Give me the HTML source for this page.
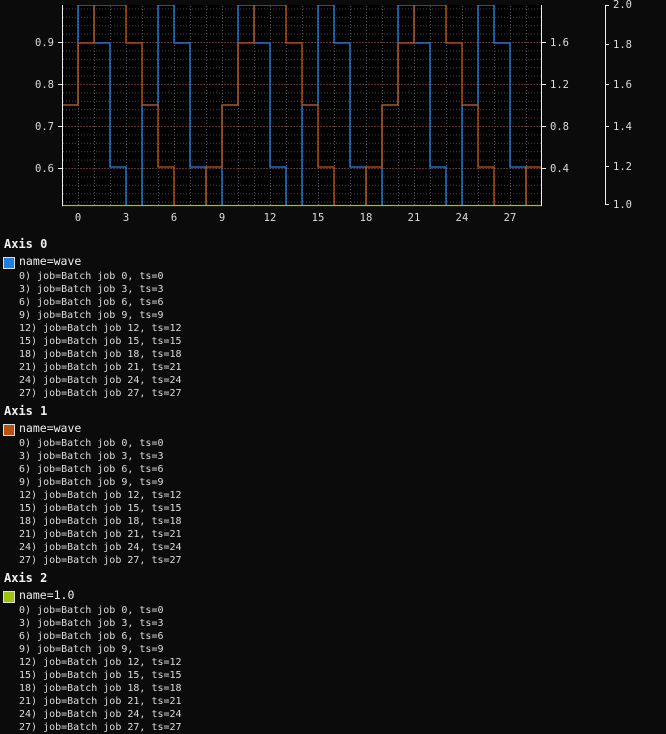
<!DOCTYPE html>
<html><head><meta charset="utf-8"><style>
html,body{margin:0;padding:0;background:#0b0b0b;width:666px;height:734px;overflow:hidden}
body{position:relative;font-family:"DejaVu Sans Mono","Liberation Mono",monospace;color:#e6e6e6}
.t{position:absolute;left:4px;font-size:12px;font-weight:bold;color:#f0f0f0}
.sw{position:absolute;left:3px;width:10px;height:10px;border:1px solid #ddd}
.n{position:absolute;left:19px;font-size:11.5px;color:#eee}
.l{position:absolute;left:19px;font-size:10px;line-height:13px;color:#ddd;white-space:pre}
svg text{font-family:"DejaVu Sans Mono","Liberation Mono",monospace;font-size:10.5px;fill:#ddd}
</style></head><body>
<svg width="666" height="230" style="position:absolute;left:0;top:0">
<defs>
<pattern id="gv" x="14" y="0" width="16" height="300" patternUnits="userSpaceOnUse"><line x1="0.5" y1="0" x2="0.5" y2="300" stroke="#555" stroke-dasharray="1,2"/></pattern>
<pattern id="gh" x="0" y="0" width="700" height="8.4" patternUnits="userSpaceOnUse"><line x1="0" y1="0.5" x2="700" y2="0.5" stroke="#444" stroke-dasharray="1,2"/></pattern>
<clipPath id="c"><rect x="62" y="5" width="480" height="200"/></clipPath>
</defs>
<rect x="62" y="5" width="480" height="200" fill="#000"/>
<rect x="62" y="5" width="480" height="200" fill="url(#gh)"/>
<rect x="62" y="5" width="480" height="200" fill="url(#gv)"/>
<g stroke="#6a2020" stroke-dasharray="1,2"><line x1="62" y1="42.5" x2="542" y2="42.5"/><line x1="62" y1="84.5" x2="542" y2="84.5"/><line x1="62" y1="126.5" x2="542" y2="126.5"/><line x1="62" y1="168.5" x2="542" y2="168.5"/></g>
<g clip-path="url(#c)" fill="none" stroke-width="1.3">
<path stroke="#1f86ef" d="M62,105 H78 V5 H94 V43 H110 V167 H126 V206 H142 V105 H158 V5 H174 V43 H190 V167 H206 V206 H222 V105 H238 V5 H254 V43 H270 V167 H286 V206 H302 V105 H318 V5 H334 V43 H350 V167 H366 V206 H382 V105 H398 V5 H414 V43 H430 V167 H446 V206 H462 V105 H478 V5 H494 V43 H510 V167 H526 V206 H542"/>
<path stroke="#c9540f" d="M62,105 H78 V43 H94 V5 H126 V43 H142 V105 H158 V167 H174 V206 H206 V167 H222 V105 H238 V43 H254 V5 H286 V43 H302 V105 H318 V167 H334 V206 H366 V167 H382 V105 H398 V43 H414 V5 H446 V43 H462 V105 H478 V167 H494 V206 H526 V167 H542"/>
</g>
<line x1="62" y1="205.5" x2="542" y2="205.5" stroke="#9fc20a" stroke-width="1.2"/>
<line x1="62.5" y1="5" x2="62.5" y2="206" stroke="#eee"/>
<line x1="541.5" y1="5" x2="541.5" y2="206" stroke="#eee"/>
<g stroke="#eee"><line x1="58" y1="42.5" x2="62" y2="42.5"/><line x1="58" y1="84.5" x2="62" y2="84.5"/><line x1="58" y1="126.5" x2="62" y2="126.5"/><line x1="58" y1="168.5" x2="62" y2="168.5"/>
<line x1="542" y1="42.5" x2="546" y2="42.5"/><line x1="542" y1="84.5" x2="546" y2="84.5"/><line x1="542" y1="126.5" x2="546" y2="126.5"/><line x1="542" y1="168.5" x2="546" y2="168.5"/>
<path fill="none" d="M609,5.5 H605.5 V204.5 H609 M605,44.5 H609 M605,84.5 H609 M605,126.5 H609 M605,166.5 H609"/></g>
<g text-anchor="end"><text x="54" y="46">0.9</text><text x="54" y="88">0.8</text><text x="54" y="130">0.7</text><text x="54" y="172">0.6</text></g>
<text x="550" y="46">1.6</text><text x="550" y="88">1.2</text><text x="550" y="130">0.8</text><text x="550" y="172">0.4</text>
<text x="613" y="8">2.0</text><text x="613" y="48">1.8</text><text x="613" y="88">1.6</text><text x="613" y="130">1.4</text><text x="613" y="170">1.2</text><text x="613" y="208">1.0</text>
<g text-anchor="middle"><text x="78" y="221">0</text><text x="126" y="221">3</text><text x="174" y="221">6</text><text x="222" y="221">9</text><text x="270" y="221">12</text><text x="318" y="221">15</text><text x="366" y="221">18</text><text x="414" y="221">21</text><text x="462" y="221">24</text><text x="510" y="221">27</text></g>
</svg>

<div class="t" style="top:237px">Axis 0</div>
<div class="sw" style="top:257px;background:#1f7fe0"></div>
<div class="n" style="top:254px">name=wave</div>
<div class="l" style="top:270px">0) job=Batch job 0, ts=0
3) job=Batch job 3, ts=3
6) job=Batch job 6, ts=6
9) job=Batch job 9, ts=9
12) job=Batch job 12, ts=12
15) job=Batch job 15, ts=15
18) job=Batch job 18, ts=18
21) job=Batch job 21, ts=21
24) job=Batch job 24, ts=24
27) job=Batch job 27, ts=27</div>

<div class="t" style="top:404px">Axis 1</div>
<div class="sw" style="top:424px;background:#b8500e"></div>
<div class="n" style="top:421px">name=wave</div>
<div class="l" style="top:437px">0) job=Batch job 0, ts=0
3) job=Batch job 3, ts=3
6) job=Batch job 6, ts=6
9) job=Batch job 9, ts=9
12) job=Batch job 12, ts=12
15) job=Batch job 15, ts=15
18) job=Batch job 18, ts=18
21) job=Batch job 21, ts=21
24) job=Batch job 24, ts=24
27) job=Batch job 27, ts=27</div>

<div class="t" style="top:571px">Axis 2</div>
<div class="sw" style="top:591px;background:#9fc20a"></div>
<div class="n" style="top:588px">name=1.0</div>
<div class="l" style="top:604px">0) job=Batch job 0, ts=0
3) job=Batch job 3, ts=3
6) job=Batch job 6, ts=6
9) job=Batch job 9, ts=9
12) job=Batch job 12, ts=12
15) job=Batch job 15, ts=15
18) job=Batch job 18, ts=18
21) job=Batch job 21, ts=21
24) job=Batch job 24, ts=24
27) job=Batch job 27, ts=27</div>
</body></html>
